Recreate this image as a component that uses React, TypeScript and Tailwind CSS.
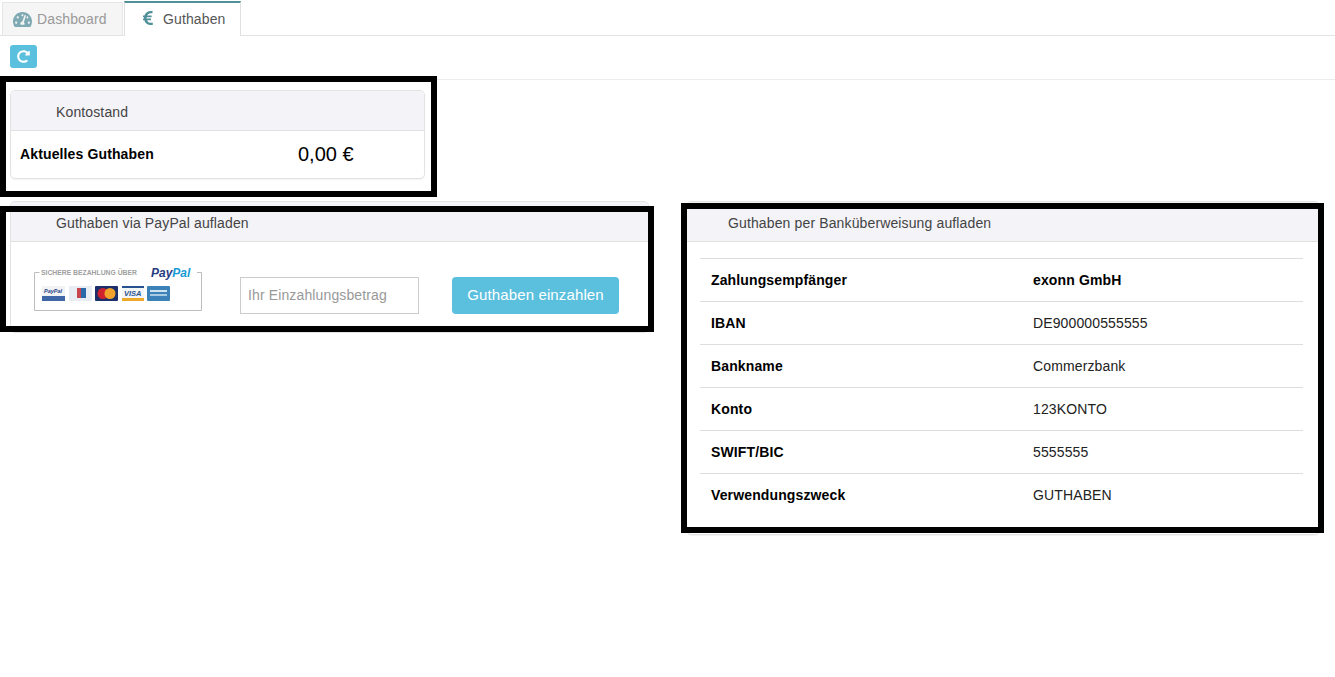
import React from "react";
import { FaTachometerAlt, FaEuroSign, FaRedoAlt } from "react-icons/fa";

function PayPalBadge() {
  return (
    <svg width="168" height="48" viewBox="0 -4 168 48" className="shrink-0 block tracking-normal">
      <path d="M5.5 4.5H0.5V42.5H167.5V4.5H163" fill="none" stroke="#bdbdbd" strokeWidth="1" />
      <text x="7" y="7" fontSize="6.8" fill="#a0a0a0" fontWeight="700" fontFamily="Liberation Sans, sans-serif">SICHERE BEZAHLUNG ÜBER</text>
      <text x="117" y="9" fontSize="12" fontStyle="italic" fontWeight="700" fontFamily="Liberation Sans, sans-serif">
        <tspan fill="#253b80">Pay</tspan><tspan fill="#179bd7">Pal</tspan>
      </text>
      <rect x="8" y="18" width="23" height="15" fill="#f2f3f5" />
      <rect x="8" y="28" width="23" height="5" fill="#3f67a8" />
      <text x="10" y="25" fontSize="5.5" fontWeight="700" fontStyle="italic" fill="#27408b" fontFamily="Liberation Sans, sans-serif">PayPal</text>
      <rect x="35" y="18" width="23" height="15" fill="#e8edf3" />
      <rect x="43" y="20" width="6" height="10" fill="#c8454f" />
      <rect x="47" y="20" width="5" height="10" fill="#2a6aa8" />
      <rect x="61" y="18" width="23" height="15" fill="#1c2f6b" rx="1" />
      <circle cx="69" cy="25.5" r="5.5" fill="#d0222e" />
      <circle cx="76" cy="25.5" r="5.5" fill="#f0a22c" />
      <rect x="88" y="18" width="22" height="15" fill="#f4f5f7" />
      <rect x="88" y="18" width="22" height="2" fill="#27528f" />
      <rect x="88" y="30" width="22" height="3" fill="#eda92a" />
      <text x="90" y="28" fontSize="7.5" fontWeight="700" fontStyle="italic" fill="#27528f" fontFamily="Liberation Sans, sans-serif">VISA</text>
      <rect x="113" y="18" width="23" height="15" fill="#3b82b8" rx="1" />
      <rect x="116" y="22" width="17" height="2" fill="#cfe2ef" />
      <rect x="116" y="26" width="17" height="2" fill="#a9cbe2" />
    </svg>
  );
}

const rows: [string, string, boolean][] = [
  ["Zahlungsempfänger", "exonn GmbH", true],
  ["IBAN", "DE900000555555", false],
  ["Bankname", "Commerzbank", false],
  ["Konto", "123KONTO", false],
  ["SWIFT/BIC", "5555555", false],
  ["Verwendungszweck", "GUTHABEN", false],
];

function Header({ title, pl }: { title: string; pl: string }) {
  return (
    <div className={`h-[40px] pt-[4px] bg-[#f3f3f8] border-b border-[#e0e0e0] rounded-t-[5px] flex items-center text-[14px] text-[#444] ${pl}`}>
      {title}
    </div>
  );
}

function Overlay({ cls }: { cls: string }) {
  return <div className={`absolute border-[6px] border-black pointer-events-none ${cls}`} />;
}

export default function App() {
  return (
    <div className="relative min-h-[677px] bg-white text-[14px] tracking-[0.13px] text-[#111] overflow-hidden font-['Liberation_Sans',Arial,sans-serif]">
      {/* tabs */}
      <div className="h-[36px] border-b border-[#e3e3e3] flex items-end pl-[2px] gap-px">
        <div className="w-[121px] h-[33px] bg-[#f5f5f5] border border-b-0 border-[#e6e6e6] flex items-center pl-[10px] gap-[5px] text-[#999]">
          <FaTachometerAlt className="text-[#7fa9b3] text-[19px]" />
          <span>Dashboard</span>
        </div>
        <div className="w-[117px] h-[35px] -mb-px bg-white border-x border-[#e0e0e0] border-t-2 border-t-[#4f9099] flex items-center pl-[15px] gap-[7px] text-[#555]">
          <FaEuroSign className="text-[#4f8f9a] text-[16px] -mt-[3px]" />
          <span>Guthaben</span>
        </div>
      </div>
      {/* toolbar */}
      <div className="h-[44px] border-b border-[#ececec] pl-[10px] pt-[9px]">
        <button className="w-[27px] h-[23px] bg-[#5bc0de] rounded-[3px] flex items-center justify-center text-white">
          <FaRedoAlt className="text-[13px]" />
        </button>
      </div>
      {/* content */}
      <div className="px-[10px] pt-[10px]">
        <div className="w-[415px] h-[89px] border border-[#e3e3e3] rounded-[5px] shadow-[0_1px_1px_rgba(0,0,0,0.05)]">
          <Header title="Kontostand" pl="pl-[45px]" />
          <div className="h-[47px] flex items-center pl-[9px]">
            <span className="w-[278px] font-bold text-black">Aktuelles Guthaben</span>
            <span className="text-[20px] text-black tracking-normal -mt-[2px]">0,00 €</span>
          </div>
        </div>
        <div className="flex items-start mt-[22px] gap-[37px]">
          <div className="w-[639px] h-[132px] border border-[#e3e3e3] rounded-[5px]">
            <Header title="Guthaben via PayPal aufladen" pl="pl-[45px]" />
            <div className="flex items-start pl-[23px] pt-[22px]">
              <PayPalBadge />
              <div className="ml-[38px] mt-[13px] w-[179px] h-[37px] border border-[#ccc] flex items-center pl-[7px] text-[#999]">
                Ihr Einzahlungsbetrag
              </div>
              <button className="ml-[33px] mt-[13px] w-[167px] h-[37px] bg-[#5bc0de] rounded-[4px] text-white text-[15px]">
                Guthaben einzahlen
              </button>
            </div>
          </div>
          <div className="w-[634px] h-[334px] border border-[#e3e3e3] rounded-[5px] shadow-[0_1px_1px_rgba(0,0,0,0.05)]">
            <Header title="Guthaben per Banküberweisung aufladen" pl="pl-[41px]" />
            <div className="ml-[13px] mr-[16px] mt-[16px]">
              {rows.map(([k, v, b]) => (
                <div key={k} className="h-[43px] border-t border-[#dedede] flex items-center pl-[11px]">
                  <span className="w-[322px] font-bold text-black">{k}</span>
                  <span className={b ? "font-bold text-black" : "text-[#222]"}>{v}</span>
                </div>
              ))}
            </div>
          </div>
        </div>
      </div>
      {/* annotation frames */}
      <Overlay cls="left-0 top-[76px] w-[437px] h-[121px]" />
      <Overlay cls="left-0 top-[206px] w-[654px] h-[126px]" />
      <Overlay cls="left-[681px] top-[203px] w-[643px] h-[330px]" />
    </div>
  );
}
